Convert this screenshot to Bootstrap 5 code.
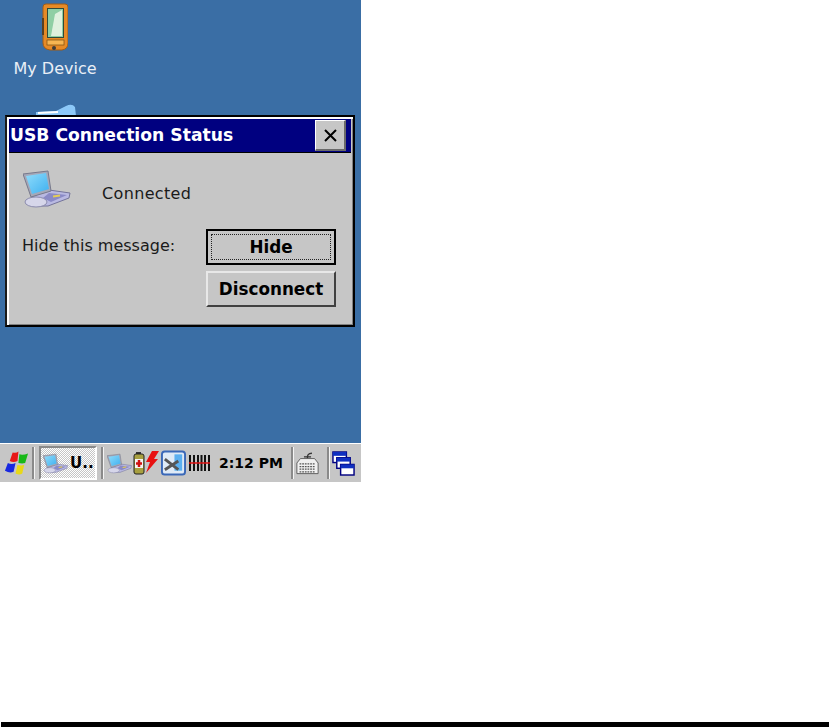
<!DOCTYPE html>
<html lang="en">
<head>
<meta charset="utf-8">
<title>USB Connection Status</title>
<link href="https://cdn.jsdelivr.net/npm/bootstrap@5.3.0/dist/css/bootstrap.min.css" rel="stylesheet">
<style>
html,body{height:727px;margin:0;overflow:hidden;background:#fff;font-family:"DejaVu Sans","Liberation Sans",sans-serif;}
.page-col{height:727px}
.ce-screen{width:361px;height:482px}
.ce-desktop{height:443px;background:#3a6ea5;overflow:hidden}
.desk-icon{position:absolute;left:0;top:0;width:110px;color:#e9eff6;font-size:16px;line-height:20px;text-align:center}
.desk-icon svg{display:block;margin:3px auto 8px}
.usb-peek{position:absolute;left:34px;top:104px}
.ce-dialog{position:absolute;left:5px;top:115px;width:350px;height:212px;background:#c6c6c6;border:2px solid #000;border-left-color:#1a1a1a;box-shadow:inset 2px 2px 0 #fff,inset -1px -1px 0 #808080;padding:2px}
.ce-title{height:34px;background:#000080;color:#fff;font-weight:700;font-size:17.2px;padding-left:1px;padding-top:1px;border-bottom:1px solid #000;flex:none}
.ce-close{width:31px;height:31px;background:#c6c6c6;border:0;border-top:1px solid #fff;border-left:1px solid #fff;border-right:2px solid #6a6a6a;border-bottom:2px solid #6a6a6a;margin-right:5px;margin-top:-1px;padding:0}
.ce-body{color:#1a1a1a;font-size:16px}
.row-top{padding:17px 0 0 14px;height:76px}
.msg-conn{margin:12px 0 0 31px;letter-spacing:.35px}
.row-mid{padding-left:13px;height:42px}
.msg-hide{margin-top:5px}
.ce-btn{width:130px;background:#c6c6c6;color:#000;font-weight:700;font-size:16.8px;padding:0;border-radius:0;line-height:1;border:0;border-top:2px solid #e8e8e8;border-left:2px solid #e8e8e8;border-right:2px solid #404040;border-bottom:2px solid #404040;height:36px;margin-right:15px}
.btn-hide{outline:2px solid #000;outline-offset:-2px;position:relative}
.btn-hide::after{content:"";position:absolute;inset:3px;border:1px dotted #222}
.ce-taskbar{height:39px;background:#c6c6c6;border-top:1px solid #fff;padding-left:4px}
.bar-sep{width:3px;height:32px;background:#8a8a8a;border-right:1px solid #f4f4f4;flex:none}
.start-logo{margin-right:3px;flex:none}
.task-btn{width:58px;height:34px;margin:0 4px;border:2px solid #8a8a8a;border-right-color:#fff;border-bottom-color:#fff;background-color:#e6e6e6;background-image:repeating-conic-gradient(#fff 0 25%,#c6c6c6 0 50%);background-size:2px 2px;font-weight:700;font-size:15px;color:#000;padding-left:2px;flex:none}
.task-label{margin-left:2px}
.tray-usb{margin-left:3px;flex:none}
.tray-batt{margin-left:1px;flex:none}
.tray-cfg{margin-left:2px;flex:none}
.tray-bar{margin-left:3px;flex:none}
.tray-time{font-weight:700;font-size:14px;color:#000;white-space:nowrap;width:81px;padding-left:9px;flex:none}
.tray-kbd{margin:0 8px 0 2px;flex:none}
.tray-win{margin-left:2px;flex:none}
.black-bar{height:5px;background:#000;margin-left:1px}
</style>
</head>
<body>
<svg width="0" height="0" class="d-block position-absolute" aria-hidden="true">
  <defs>
    <linearGradient id="scr" x1="0" y1="0" x2="1" y2="1"><stop offset="0" stop-color="#8fdcfb"/><stop offset="1" stop-color="#3fb0f0"/></linearGradient>
    <symbol id="usb" viewBox="0 0 48 38">
      <path d="M8 27 L26 20 L47 23 L46 28 L25 36 L10 36 Z" fill="#b9b9e2" stroke="#74749a"/>
      <path d="M26 23 L44 25 L28 32 L20 28 Z" fill="#8a8ac6"/>
      <path d="M30 26.500 l7 -1" stroke="#e4cc58" stroke-width="2"/>
      <ellipse cx="13" cy="32" rx="11" ry="5" fill="#d6d6ea" stroke="#8c8cae"/>
      <path d="M0 4 L25 1 L28 21 L8 27 Z" fill="#a5a8b8" stroke="#77798c"/>
      <path d="M3 6 L23 3 L26 19 L9 24 Z" fill="url(#scr)"/>
    </symbol>
  </defs>
</svg>
<div class="page-col d-flex flex-column">
  <div class="ce-screen d-flex flex-column">
    <div class="ce-desktop position-relative">
      <div class="desk-icon">
        <svg width="26" height="48" viewBox="0 0 26 48">
          <path d="M4 1 H23 Q26 1 26 4 V40 Q26 46 20 47 H8 Q1 46 1 40 V4 Q1 1 4 1 Z" fill="#e68a26" stroke="#a25c14"/>
          <rect x="0" y="15" width="2" height="17" fill="#5a4020"/>
          <rect x="5" y="5" width="17" height="30" fill="#2f4a3a"/>
          <rect x="6" y="6" width="15" height="28" fill="#8fcfa4"/>
          <path d="M13 11 L20 7 V33 H9 Z" fill="#dff1de"/>
          <rect x="5" y="37" width="17" height="5" fill="#f6b552" stroke="#7a4c10" stroke-width=".7"/>
          <circle cx="12" cy="45" r="2" fill="#3c3c3c"/>
        </svg>
        My Device
      </div>
      <svg class="usb-peek" width="44" height="12" viewBox="0 0 44 12"><path d="M2 12 L2 8 L22 7 L32 2 Q38 -1 41 3 L42 12 Z" fill="#8cc8f8"/><path d="M4 9 L24 8" stroke="#fff" stroke-width="2"/></svg>

      <div class="ce-dialog d-flex flex-column">
        <div class="ce-title d-flex align-items-center justify-content-between">
          <span>USB Connection Status</span>
          <button type="button" class="ce-close d-flex align-items-center justify-content-center" aria-label="Close">
            <svg width="13" height="13" viewBox="0 0 13 13"><path d="M1 1 L12 12 M12 1 L1 12" stroke="#000" stroke-width="2"/></svg>
          </button>
        </div>
        <div class="ce-body flex-grow-1 d-flex flex-column">
          <div class="row-top d-flex align-items-start">
            <svg width="48" height="38"><use href="#usb"/></svg>
            <span class="msg-conn">Connected</span>
          </div>
          <div class="row-mid d-flex align-items-start justify-content-between">
            <span class="msg-hide">Hide this message:</span>
            <button type="button" class="btn ce-btn btn-hide">Hide</button>
          </div>
          <div class="d-flex justify-content-end">
            <button type="button" class="btn ce-btn">Disconnect</button>
          </div>
        </div>
      </div>
    </div>
    <div class="ce-taskbar d-flex align-items-center">
      <svg width="25" height="26" viewBox="0 0 26 26" class="start-logo">
        <path d="M9 2 Q13 3 15 1 L14 11 Q10 13 6 11 Z" fill="#e81818"/>
        <path d="M16 4 Q20 5 25 3 L22 13 Q19 14 15 13 Z" fill="#18b818"/>
        <path d="M4 13 Q8 15 12 13 L10 22 Q6 24 1 21 Z" fill="#1828e0"/>
        <path d="M14 15 Q18 16 21 15 L19 24 Q16 26 12 24 Z" fill="#e8d818"/>
      </svg>
      <div class="bar-sep"></div>
      <div class="task-btn d-flex align-items-center">
        <svg width="25" height="21"><use href="#usb"/></svg><span class="task-label">U..</span>
      </div>
      <div class="bar-sep"></div>
      <svg width="25" height="21" class="tray-usb"><use href="#usb"/></svg>
      <svg width="26" height="24" viewBox="0 0 26 24" class="tray-batt">
        <rect x="3" y="1" width="5" height="3" fill="#333"/>
        <rect x="1" y="3" width="10" height="20" rx="2" fill="#a8a040" stroke="#222"/>
        <rect x="2" y="8" width="8" height="9" fill="#f4f4f4"/>
        <path d="M6 9 v7 M3 12.500 h6" stroke="#d01010" stroke-width="2.500"/>
        <path d="M19 0 H26 L21 8 H25 L13 22 L17 11 H13 Z" fill="#e81010"/>
      </svg>
      <svg width="25" height="26" viewBox="0 0 26 26" class="tray-cfg">
        <rect x="1" y="1" width="24" height="24" rx="3" fill="#dfeaf6" stroke="#3a68b8" stroke-width="2"/>
        <rect x="14" y="4" width="8" height="17" fill="#5cb0f0"/>
        <path d="M4 9 L18 20 M4 20 L18 11" stroke="#555" stroke-width="3"/>
      </svg>
      <svg width="21" height="16" viewBox="0 0 21 16" class="tray-bar">
        <path d="M1 0 V16 M5 0 V16 M9 0 V16 M12.500 0 V16 M16 0 V16 M20 0 V16" stroke="#111" stroke-width="2"/>
        <path d="M0 8 H21" stroke="#e01010" stroke-width="1.500"/>
      </svg>
      <span class="tray-time">2:12 PM</span>
      <div class="bar-sep"></div>
      <svg width="23" height="28" viewBox="0 0 26 28" class="tray-kbd">
        <path d="M13 9 Q12 3 18 3 M9 7 H17" stroke="#333" fill="none" stroke-width="1.500"/>
        <path d="M1 14 L5 9 H21 L25 14 V26 H1 Z" fill="#f0f0f0" stroke="#555"/>
        <path d="M4 15 H22 M4 18 H22 M4 21 H22 M4 24 H22" stroke="#555" stroke-width="1.500" stroke-dasharray="2 1"/>
      </svg>
      <div class="bar-sep"></div>
      <svg width="23" height="25" viewBox="0 0 24 26" class="tray-win">
        <rect x="1" y="1" width="14" height="11" fill="#fff" stroke="#000080" stroke-width="1.500"/><rect x="1" y="1" width="14" height="4" fill="#1030c0"/>
        <rect x="5" y="7" width="14" height="11" fill="#fff" stroke="#000080" stroke-width="1.500"/><rect x="5" y="7" width="14" height="4" fill="#1030c0"/>
        <rect x="9" y="14" width="14" height="11" fill="#fff" stroke="#000080" stroke-width="1.500"/><rect x="9" y="14" width="14" height="4" fill="#1030c0"/>
      </svg>
    </div>
  </div>
  <div class="flex-grow-1"></div>
  <div class="black-bar"></div>
</div>
</body>
</html>
